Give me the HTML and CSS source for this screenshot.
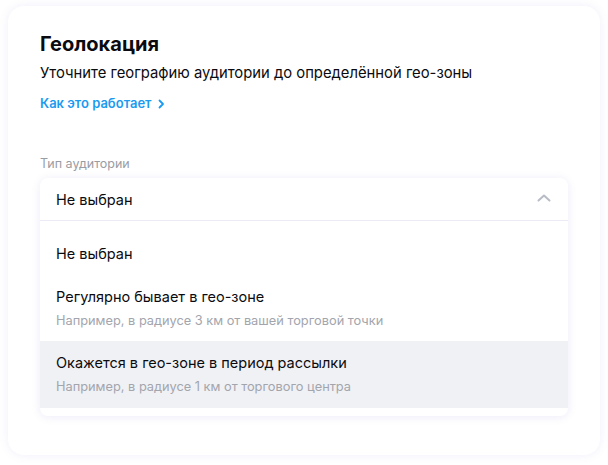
FILE: index.html
```html
<!DOCTYPE html>
<html lang="ru">
<head>
<meta charset="utf-8">
<link rel="stylesheet" href="styles.css">
</head>
<body>
<div class="card">
  <h1 class="title">Геолокация</h1>
  <p class="subtitle">Уточните географию аудитории до определённой гео-зоны</p>
  <a class="link" href="#">Как это работает <svg class="link-icon" width="8" height="10" viewBox="0 0 8 10"><path d="M2.5 1.5 L6 5 L2.5 8.5" fill="none" stroke="#1a9bf0" stroke-width="1.8" stroke-linecap="round" stroke-linejoin="round"/></svg></a>
  <div class="field-label">Тип аудитории</div>
  <div class="select">
    <div class="select-head">
      <span>Не выбран</span>
      <svg class="chev" width="16" height="10" viewBox="0 0 16 10"><path d="M2.5 7.5 L8 2.5 L13.5 7.5" fill="none" stroke="#b8bcc6" stroke-width="2" stroke-linecap="round" stroke-linejoin="round"/></svg>
    </div>
    <ul class="options">
      <li class="option single">Не выбран</li>
      <li class="option">
        <div class="opt-title">Регулярно бывает в гео-зоне</div>
        <div class="opt-sub">Например, в радиусе 3 км от вашей торговой точки</div>
      </li>
      <li class="option active">
        <div class="opt-title">Окажется в гео-зоне в период рассылки</div>
        <div class="opt-sub">Например, в радиусе 1 км от торгового центра</div>
      </li>
    </ul>
  </div>
</div>
</body>
</html>
```
FILE: styles.css
```css
* { box-sizing: border-box; }
html, body { margin: 0; padding: 0; background: #ffffff; }
body {
  font-family: Inter, Roboto, "Liberation Sans", sans-serif;
  color: #0b0b0f;
  padding: 6px 8px 10px 8px;
}
.card {
  width: 592px;
  height: 449px;
  background: #fff;
  border-radius: 16px;
  box-shadow: 0 0 10px rgba(120, 120, 220, 0.12);
  padding: 25px 32px 0 32px;
}
.title {
  margin: 0;
  font-size: 20px;
  line-height: 26px;
  font-weight: 700;
}
.subtitle {
  margin: 5px 0 0 0;
  font-size: 14.8px;
  line-height: 22px;
}
.link {
  display: inline-flex;
  align-items: center;
  gap: 5px;
  margin-top: 10px;
  color: #1a9bf0;
  font-size: 13px;
  line-height: 18px;
  font-weight: 600;
  text-decoration: none;
}
.link-icon { margin-top: 1px; }
.field-label {
  margin-top: 43px;
  font-size: 12.5px;
  line-height: 18px;
  color: #9a9ca3;
}
.select {
  margin-top: 5px;
  border-radius: 8px;
  background: #fff;
  box-shadow: 0 1px 8px rgba(110, 110, 210, 0.14);
  overflow: hidden;
  padding-bottom: 8px;
}
.select-head {
  height: 43px;
  display: flex;
  align-items: center;
  justify-content: space-between;
  padding: 0 16px;
  font-size: 14.5px;
  border-bottom: 1px solid #ebebf5;
}
.chev { margin-top: -2px; }
.options { list-style: none; margin: 0; padding: 0; }
.option {
  padding: 11px 16px 11px 16px;
  font-size: 14.5px;
}
.option.single { padding: 24px 16px 13px 16px; }
.opt-title { line-height: 22px; }
.opt-sub {
  margin-top: 4px;
  font-size: 12.8px;
  line-height: 18px;
  color: #a3a5ad;
}
.option.active { background: #f0f1f5; padding-bottom: 12px; }
```
